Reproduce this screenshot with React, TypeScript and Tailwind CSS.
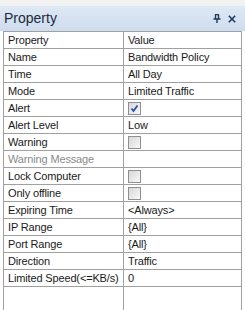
import React from 'react';

type Row = { name: string; value?: string; check?: boolean; dim?: boolean };

const rows: Row[] = [
    { name: 'Name', value: 'Bandwidth Policy' },
    { name: 'Time', value: 'All Day' },
    { name: 'Mode', value: 'Limited Traffic' },
    { name: 'Alert', check: true },
    { name: 'Alert Level', value: 'Low' },
    { name: 'Warning', check: false },
    { name: 'Warning Message', dim: true },
    { name: 'Lock Computer', check: false },
    { name: 'Only offline', check: false },
    { name: 'Expiring Time', value: '<Always>' },
    { name: 'IP Range', value: '{All}' },
    { name: 'Port Range', value: '{All}' },
    { name: 'Direction', value: 'Traffic' },
    { name: 'Limited Speed(<=KB/s)', value: '0' },
];

const CheckBox = ({ checked }: { checked: boolean }) => (
    <div className="w-[13px] h-[13px] border border-[#8f8f8f] bg-gradient-to-br from-[#d8d8d8] to-[#f8f8f8] flex items-center justify-center">
        {checked && (
            <svg width="9" height="9" viewBox="0 0 9 9">
                <path d="M1.5 4.5 L3.5 7 L7.5 1.5" fill="none" stroke="#2a4fb0" strokeWidth="1.8" />
            </svg>
        )}
    </div>
);

const App = () => {
    return (
        <div className="w-[245px] h-[310px] bg-white flex flex-col overflow-hidden text-[11px] tracking-[-0.15px] text-[#1a1a1a]" style={{ fontFamily: '"Liberation Sans", Arial, sans-serif' }}>
            <div className="h-[6px] bg-[#f2f2f2]" />
            <div className="h-[25px] flex items-center pl-[4px] pr-[9px] bg-gradient-to-b from-[#dfe9f5] to-[#cddcee]">
                <span className="text-[14px] tracking-normal text-[#1e2a3a] flex-1">Property</span>
                <svg width="8" height="9" viewBox="0 0 8 9" className="mr-[7px]">
                    <path d="M2 0.5 H6 M2.5 0.5 V5 M5.5 0.5 V5 M0.5 5 H7.5 M4 5 V9" stroke="#1e395b" strokeWidth="1.4" fill="none" />
                </svg>
                <svg width="8" height="8" viewBox="0 0 8 8">
                    <path d="M0.8 0.8 L7.2 7.2 M7.2 0.8 L0.8 7.2" stroke="#1e395b" strokeWidth="1.6" />
                </svg>
            </div>
            <div className="ml-[3px] w-[239px] flex-1 flex flex-col border-x border-t border-[#a0a0a0]">
                <div className="h-[17px] flex border-b border-[#a0a0a0] shrink-0">
                    <div className="w-[120px] pl-[4px] border-r border-[#a0a0a0] leading-[16px]">Property</div>
                    <div className="flex-1 pl-[4px] leading-[16px]">Value</div>
                </div>
                {rows.map((r) => (
                    <div key={r.name} className="h-[17px] flex border-b border-[#a0a0a0] shrink-0">
                        <div className={`w-[120px] pl-[4px] border-r border-[#a0a0a0] leading-[16px] whitespace-nowrap overflow-hidden ${r.dim ? 'text-[#8a8a8a]' : ''}`}>{r.name}</div>
                        <div className="flex-1 pl-[4px] leading-[16px] flex items-center">
                            {r.check !== undefined ? <CheckBox checked={r.check} /> : r.value}
                        </div>
                    </div>
                ))}
                <div className="flex-1 flex">
                    <div className="w-[120px] border-r border-[#a0a0a0]" />
                    <div className="flex-1" />
                </div>
            </div>
        </div>
    );
};

export default App;
